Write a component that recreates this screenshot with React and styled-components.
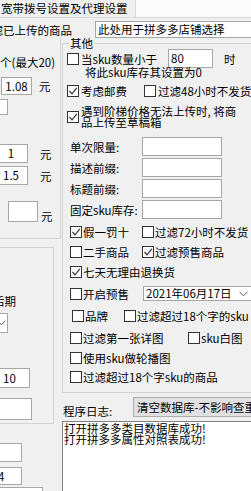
import React from "react";
import styled, { createGlobalStyle } from "styled-components";

const GlobalStyle = createGlobalStyle`
  html, body {
    margin: 0;
    padding: 0;
    background: #f0f0f0;
  }
  body {
    font-family: "Noto Sans CJK SC", "Noto Sans", sans-serif;
    font-size: 11.5px;
    color: #000;
  }
  #root {
    width: 251px;
    height: 491px;
    overflow: hidden;
  }
`;

const Window = styled.div`
  width: 251px;
  height: 491px;
  overflow: hidden;
  display: flex;
  flex-direction: column;
`;

const TabStrip = styled.div`
  flex: none;
  display: flex;
  height: 17px;
  background: #fbfbfb;
  border-bottom: 1px solid #d9d9d9;
`;

const Tab = styled.div`
  width: 134px;
  padding-left: 1px;
  background: #f0f0f0;
  border-right: 1px solid #d9d9d9;
  line-height: 17px;
  white-space: nowrap;
`;

const TopRow = styled.div`
  flex: none;
  display: flex;
  align-items: center;
  height: 17px;
  margin-top: 3px;
`;

const Text = styled.span`
  flex: none;
  white-space: nowrap;
  overflow: ${(p) => (p.$clip ? "hidden" : "visible")};
  width: ${(p) => (p.$w ? `${p.$w}px` : "auto")};
  margin-left: ${(p) => p.$ml || 0}px;
  margin-top: ${(p) => p.$mt || 0}px;
  line-height: ${(p) => p.$lh || 12}px;
  padding-left: ${(p) => p.$pl || 0}px;
  align-self: ${(p) => p.$self || "auto"};
`;

const Field = styled.div`
  flex: none;
  box-sizing: border-box;
  width: ${(p) => p.$w}px;
  height: ${(p) => p.$h || 19}px;
  margin-left: ${(p) => p.$ml || 0}px;
  margin-top: ${(p) => p.$mt || 0}px;
  background: #fff;
  border: 1px solid #a6a6a6;
  line-height: ${(p) => (p.$h || 19) - 2}px;
  padding-left: ${(p) => (p.$pl === undefined ? 2 : p.$pl)}px;
  text-align: ${(p) => p.$align || "left"};
  white-space: nowrap;
`;

const Combo = styled(Field)`
  display: flex;
  align-items: center;
  justify-content: ${(p) => (p.$end ? "space-between" : "flex-start")};
  padding-right: 4px;
  svg {
    flex: none;
  }
`;

const Columns = styled.div`
  flex: 1;
  display: flex;
  align-items: flex-start;
`;

const LeftCol = styled.div`
  flex: none;
  width: 61px;
  display: flex;
  flex-direction: column;
`;

const Panel = styled.div`
  box-sizing: border-box;
  display: flex;
  flex-direction: column;
  align-items: flex-start;
  width: ${(p) => p.$w}px;
  height: ${(p) => p.$h}px;
  margin-top: ${(p) => p.$mt || 0}px;
  border-right: 1px solid #d3d3d3;
  border-bottom: 1px solid #d3d3d3;
  border-top: ${(p) => (p.$top ? "1px solid #d3d3d3" : "none")};
`;

const Row = styled.div`
  flex: none;
  display: flex;
  align-items: center;
  height: ${(p) => p.$h || 12}px;
  margin-top: ${(p) => p.$mt || 0}px;
`;

const RightCol = styled.div`
  flex: none;
  width: 200px;
  margin-left: 1px;
  display: flex;
  flex-direction: column;
  align-self: stretch;
`;

const Group = styled.fieldset`
  margin: -1px 0 0 0;
  padding: 0 0 9px 0;
  min-width: 0;
  border: 1px solid #d3d3d3;
  display: flex;
  flex-direction: column;
`;

const Legend = styled.legend`
  margin-left: 6px;
  padding: 0 1px;
  line-height: 12px;
`;

const Item = styled.label`
  flex: none;
  display: flex;
  align-items: center;
  width: ${(p) => (p.$w ? `${p.$w}px` : "auto")};
  margin-left: ${(p) => p.$ml || 0}px;
  white-space: nowrap;
`;

const Box = styled.span`
  flex: none;
  box-sizing: border-box;
  width: 12px;
  height: 12px;
  border: 1px solid #333;
  background: #fff;
  display: flex;
  align-items: center;
  justify-content: center;
`;

const ItemText = styled.span`
  margin-left: ${(p) => p.$gap || 1}px;
  line-height: ${(p) => p.$lh || 12}px;
`;

const Button = styled.div`
  flex: none;
  box-sizing: border-box;
  width: 130px;
  height: 20px;
  background: #e1e1e1;
  border: 1px solid #adadad;
  line-height: 18px;
  padding-left: 3px;
  white-space: nowrap;
`;

const LogHeader = styled.div`
  flex: none;
  display: flex;
  align-items: flex-start;
  margin-top: 4px;
`;

const LogBox = styled.div`
  flex: 1;
  box-sizing: border-box;
  margin-top: 4px;
  background: #fff;
  border: 1px solid #828282;
  padding: 1px 1px 0;
  line-height: 11px;
  white-space: nowrap;
`;

const Tick = () => (
  <svg width="10" height="10" viewBox="0 0 10 10">
    <polyline points="1.5,5 4,7.8 8.8,1.8" fill="none" stroke="#333" strokeWidth="1.2" />
  </svg>
);

const Chevron = () => (
  <svg width="9" height="6" viewBox="0 0 9 6">
    <polyline points="0.5,0.8 4.5,4.8 8.5,0.8" fill="none" stroke="#555" strokeWidth="1" />
  </svg>
);

const Check = ({ checked, w, ml, gap, lh, children }) => (
  <Item $w={w} $ml={ml}>
    <Box>{checked && <Tick />}</Box>
    <ItemText $gap={gap} $lh={lh}>
      {children}
    </ItemText>
  </Item>
);

const FormRow = ({ label, mt }) => (
  <Row $h={19} $mt={mt}>
    <Text $w={72} $ml={7}>
      {label}
    </Text>
    <Field $w={80} />
  </Row>
);

export default function App() {
  return (
    <>
      <GlobalStyle />
      <Window>
        <TabStrip>
          <Tab>宽带拨号设置及代理设置</Tab>
        </TabStrip>

        <TopRow>
          <Text $w={115} $ml={-20} $clip>
            过滤已上传的商品
          </Text>
          <Field $w={170} $h={17} $pl={2}>
            此处用于拼多多店铺选择
          </Field>
        </TopRow>

        <Columns>
          <LeftCol>
            <Panel $w={61} $h={201}>
              <Text $mt={18}>个(最大20)</Text>
              <Row $h={18} $mt={9}>
                <Field $w={31} $h={18} $ml={1} $align="center" $pl={0}>
                  1.08
                </Field>
                <Text $ml={7}>元</Text>
              </Row>
              <Field $w={10} $h={16} $ml={-2} $mt={4} />
              <Row $h={19} $mt={29}>
                <Field $w={34} $ml={-6} $align="center" $pl={0}>
                  1
                </Field>
                <Text $ml={12}>元</Text>
              </Row>
              <Row $h={19} $mt={3}>
                <Field $w={34} $ml={-6} $align="center" $pl={0}>
                  1.5
                </Field>
                <Text $ml={12}>元</Text>
              </Row>
              <Row $h={21} $mt={16}>
                <Field $w={30} $h={21} $ml={8} />
                <Text $ml={3} $self="flex-end">
                  元
                </Text>
              </Row>
            </Panel>

            <Panel $w={54} $h={177} $mt={8} $top>
              <Text $mt={47} $ml={-7}>
                后期
              </Text>
              <Combo $w={20} $h={20} $ml={-12} $mt={6} $pl={8}>
                <Chevron />
              </Combo>
              <Field $w={32} $h={20} $ml={-2} $mt={35} $pl={4}>
                10
              </Field>
              <Field $w={34} $h={22} $ml={-2} $mt={10} />
            </Panel>

            <Field $w={24} $ml={-2} $mt={19} />
            <Field $w={30} $h={18} $ml={-8} $mt={5} $pl={5}>
              4
            </Field>
            <Field $w={45} $h={20} $ml={-2} $mt={2} />
          </LeftCol>

          <RightCol>
            <Group>
              <Legend>其他</Legend>
              <Row $h={19}>
                <Check ml={4} w={101} gap={2}>
                  当sku数量小于
                </Check>
                <Field $w={45}>80</Field>
                <Text $ml={11}>时</Text>
              </Row>
              <Text $ml={22} $mt={-1} $lh={11}>
                将此sku库存其设置为0
              </Text>
              <Row $h={13} $mt={6}>
                <Check checked ml={4} w={77} gap={2}>
                  考虑邮费
                </Check>
                <Check gap={2}>过滤48小时不发货</Check>
              </Row>
              <Row $h={22} $mt={9}>
                <Check checked ml={4} gap={2} lh={11}>
                  遇到阶梯价格无法上传时, 将商
                  <br />
                  品上传至草稿箱
                </Check>
              </Row>

              <FormRow label="单次限量:" mt={9} />
              <FormRow label="描述前缀:" mt={2} />
              <FormRow label="标题前缀:" mt={2} />
              <FormRow label="固定sku库存:" mt={2} />

              <Row $mt={7}>
                <Check checked ml={7} w={72}>
                  假一罚十
                </Check>
                <Check>过滤72小时不发货</Check>
              </Row>
              <Row $mt={8}>
                <Check ml={7} w={72}>
                  二手商品
                </Check>
                <Check checked>过滤预售商品</Check>
              </Row>
              <Row $mt={8}>
                <Check checked ml={7}>
                  七天无理由退换货
                </Check>
              </Row>
              <Row $h={15} $mt={8}>
                <Check ml={7} w={73}>
                  开启预售
                </Check>
                <Combo $w={110} $h={15} $pl={2} $end>
                  <span>2021年06月17日</span>
                  <Chevron />
                </Combo>
              </Row>
              <Row $mt={9}>
                <Check ml={9} w={52}>
                  品牌
                </Check>
                <Check>过滤超过18个字的sku</Check>
              </Row>
              <Row $mt={10}>
                <Check ml={7} w={118}>
                  过滤第一张详图
                </Check>
                <Check>sku白图</Check>
              </Row>
              <Row $mt={8}>
                <Check ml={7}>使用sku做轮播图</Check>
              </Row>
              <Row $mt={7}>
                <Check ml={7}>过滤超过18个字sku的商品</Check>
              </Row>
            </Group>

            <LogHeader>
              <Text $w={70} $pl={1} $mt={8}>
                程序日志:
              </Text>
              <Button>清空数据库-不影响查重</Button>
            </LogHeader>
            <LogBox>
              打开拼多多类目数据库成功!
              <br />
              打开拼多多属性对照表成功!
            </LogBox>
          </RightCol>
        </Columns>
      </Window>
    </>
  );
}
